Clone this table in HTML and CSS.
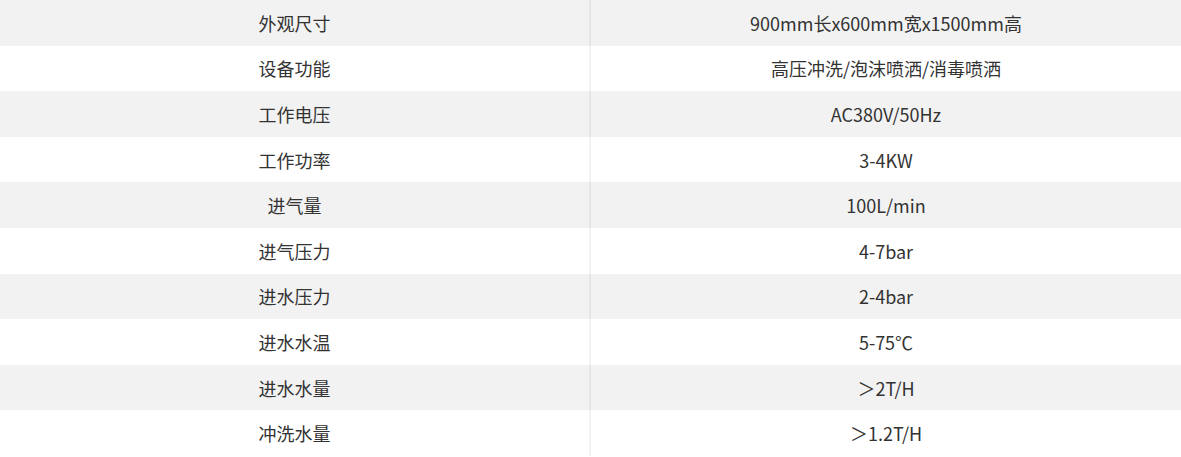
FILE: index.html
```html
<!DOCTYPE html>
<html lang="zh">
<head>
<meta charset="utf-8">
<link rel="stylesheet" href="styles.css">
</head>
<body>
<div class="spec">
  <div class="row"><div class="cell key">外观尺寸</div><div class="cell val">900mm长x600mm宽x1500mm高</div></div>
  <div class="row"><div class="cell key">设备功能</div><div class="cell val">高压冲洗/泡沫喷洒/消毒喷洒</div></div>
  <div class="row"><div class="cell key">工作电压</div><div class="cell val">AC380V/50Hz</div></div>
  <div class="row"><div class="cell key">工作功率</div><div class="cell val">3-4KW</div></div>
  <div class="row"><div class="cell key">进气量</div><div class="cell val">100L/min</div></div>
  <div class="row"><div class="cell key">进气压力</div><div class="cell val">4-7bar</div></div>
  <div class="row"><div class="cell key">进水压力</div><div class="cell val">2-4bar</div></div>
  <div class="row"><div class="cell key">进水水温</div><div class="cell val">5-75℃</div></div>
  <div class="row"><div class="cell key">进水水量</div><div class="cell val">＞2T/H</div></div>
  <div class="row"><div class="cell key">冲洗水量</div><div class="cell val">＞1.2T/H</div></div>
</div>
</body>
</html>
```
FILE: styles.css
```css
html, body {
  margin: 0;
  padding: 0;
  background: #fff;
}
.spec {
  width: 1181px;
  font-family: "Noto Sans CJK SC", "Noto Sans", sans-serif;
  font-size: 18px;
  color: #333;
}
.row {
  display: grid;
  grid-template-columns: 589px 592px;
  height: 45.6px;
}
.row:nth-child(odd) {
  background: #f2f2f2;
}
.cell {
  display: flex;
  align-items: center;
  justify-content: center;
}
.val {
  border-left: 2px solid rgba(0, 0, 0, 0.05);
}
```
